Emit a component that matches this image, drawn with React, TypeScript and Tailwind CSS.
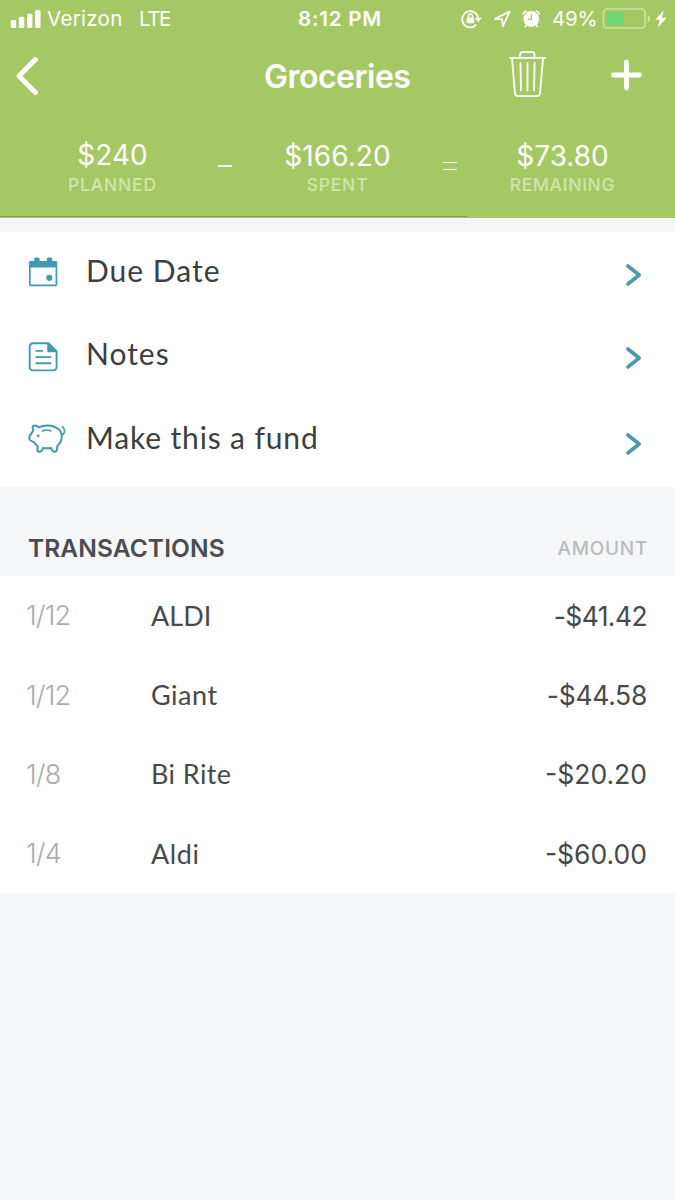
import React from 'react';

interface Transaction {
  date: string;
  name: string;
  amount: string;
  nameClass: string;
  amountClass: string;
}

const transactions: Transaction[] = [
  { date: '1/12', name: 'ALDI', amount: '-$41.42', nameClass: '', amountClass: 'tracking-[-0.6px]' },
  { date: '1/12', name: 'Giant', amount: '-$44.58', nameClass: 'tracking-[0.5px]', amountClass: 'tracking-[-0.3px]' },
  { date: '1/8', name: 'Bi Rite', amount: '-$20.20', nameClass: 'tracking-[0.4px]', amountClass: '' },
  { date: '1/4', name: 'Aldi', amount: '-$60.00', nameClass: 'tracking-[0.6px]', amountClass: '' },
];

const SignalIcon = () => (
  <svg width="32" height="20" viewBox="0 0 32 20" fill="white">
    <rect x="0.7" y="11" width="5.4" height="8" rx="1.5" />
    <rect x="8.8" y="7.8" width="5.5" height="11.2" rx="1.5" />
    <rect x="17" y="4.7" width="5.4" height="14.3" rx="1.5" />
    <rect x="25" y="1" width="5.5" height="18" rx="1.5" />
  </svg>
);

const RotationLockIcon = () => (
  <svg width="22" height="20" viewBox="0 0 22 20" fill="none" stroke="white" strokeWidth="1.7">
    <path d="M18.3 9A8.1 8.1 0 1 0 16.4 15.6" />
    <path d="M14.8 8.8h6.8l-3.3 4.6z" fill="white" stroke="none" />
    <rect x="6.6" y="8.6" width="7.6" height="5.6" rx="0.8" fill="white" stroke="none" />
    <path d="M8.4 9V7a2 2 0 0 1 4 0v2" strokeWidth="1.4" />
  </svg>
);

const LocationIcon = () => (
  <svg width="18" height="18" viewBox="0 0 18 18" fill="none" stroke="white" strokeWidth="1.8" strokeLinejoin="round">
    <path d="M16.6 1.6 2 8.8l7.2.6.6 7z" />
  </svg>
);

const AlarmIcon = () => (
  <svg width="18" height="18" viewBox="0 0 18 18" fill="none" stroke="white" strokeLinecap="round">
    <circle cx="9.3" cy="9" r="7.9" fill="white" stroke="none" />
    <path d="M1.2 4A5 5 0 0 1 4.2 1M17.4 4a5 5 0 0 0-3-3M4.2 15.2l-1 1.4M14.4 15.2l1 1.4" strokeWidth="1.6" />
    <path d="M9.4 4.6v4.8H6.2" stroke="#a4c964" strokeWidth="1.3" />
  </svg>
);

const BatteryIcon = () => (
  <svg width="49" height="22" viewBox="0 0 49 22" fill="none">
    <rect x="1.5" y="1" width="41.5" height="19" rx="3.5" stroke="#cde2a5" strokeWidth="1.6" />
    <rect x="5" y="4" width="17.2" height="13.2" rx="1" fill="#6dd572" />
    <path d="M45.7 7.3c3.2.8 3.2 6.1 0 6.9z" fill="#cde2a5" />
  </svg>
);

const BoltIcon = () => (
  <svg width="12" height="18" viewBox="0 0 12 18" fill="white">
    <path d="M8.6.3.4 9.8h4.2L3 17.6l8.4-9.9H7z" />
  </svg>
);

const TrashIcon = () => (
  <svg width="38" height="47" viewBox="0 0 38 47" fill="none" stroke="white" strokeWidth="1.8" strokeLinecap="round">
    <path d="M1 6.8h35" />
    <path d="M11 6.5V4.2A3.2 3.2 0 0 1 14.2 1h8.2a3.2 3.2 0 0 1 3.2 3.2v2.3" />
    <path d="m3 7.2 2.9 34.6a3.8 3.8 0 0 0 3.8 3.4h17.6a3.8 3.8 0 0 0 3.8-3.4L34 7.2" />
    <path d="M11.4 12l.6 27.4M18.5 12v27.4M25.6 12l-.6 27.4" />
  </svg>
);

const CalendarIcon = () => (
  <svg width="30" height="30" viewBox="0 0 30 30" fill="#4398b3">
    <path d="M2 4h26a1 1 0 0 1 1 1v5.5H1V5a1 1 0 0 1 1-1z" />
    <rect x="6.2" y="0.4" width="5.4" height="6" rx="1.6" />
    <rect x="18.8" y="0.4" width="5.4" height="6" rx="1.6" />
    <rect x="1.8" y="5" width="26.6" height="23.3" rx="0.8" fill="none" stroke="#4398b3" strokeWidth="1.7" />
    <circle cx="21.3" cy="20.8" r="3.1" />
  </svg>
);

const NotesIcon = () => (
  <svg width="30" height="30" viewBox="0 0 30 30" fill="none" stroke="#4398b3" strokeWidth="1.9" strokeLinecap="round" strokeLinejoin="round">
    <path d="M20.5 1.3H5a3.3 3.3 0 0 0-3.3 3.3v20.5A3.3 3.3 0 0 0 5 28.4h20.3a3.3 3.3 0 0 0 3.3-3.3V9.2z" />
    <path d="M20.2 2v7.2h8z" fill="#4398b3" />
    <path d="M8.3 8.9h6M8.3 15.1h14.2M8.3 21.3h14.2" />
  </svg>
);

const PiggyIcon = () => (
  <svg width="38" height="30" viewBox="0 0 38 30" fill="none" stroke="#4398b3" strokeWidth="2" strokeLinecap="round" strokeLinejoin="round">
    <path d="M11 3.4C9.2 1.9 6.6 1.3 5 2c-.9.6-.1 3 .3 4.6C4 8 3.6 9.4 3 10.6c-1.3.2-1.6.8-1.6 2v2.6c0 1.4 3 2 4.4 2.8 1 1.8 2.4 3 4 4l-.5 3.4c-.1 1.5.5 2.3 2 2.3s2.3-.4 2.8-1.6l.9-2.1c2.8.5 5.4.5 8.2 0l.8 2.1c.5 1.2 1.3 1.6 2.6 1.6 1.5 0 2.1-.6 2.3-2l.6-4c2.7-2.4 4.3-5.5 4.3-9.2 0-3-1.2-5.6-3.4-7.4C27.6 2.8 24.4 1.5 20.4 1.4 17 1.3 13.6 2 11 3.4z" />
    <path d="M33.6 11.2c2-.8 3.1-2.6 2.9-4.8-.2-1.6-.9-2.8-2.1-3.8" strokeWidth="1.6" />
    <path d="M14.4 7.2c2.6-1.3 5.8-1.4 8.6-.2" strokeWidth="1.5" />
    <circle cx="10.2" cy="11.8" r="1.4" fill="#4398b3" stroke="none" />
  </svg>
);

const Chevron = () => (
  <svg width="18" height="24" viewBox="0 0 18 24" fill="none" stroke="#4a99ae" strokeWidth="3.6" strokeLinecap="round" strokeLinejoin="round">
    <path d="M2.9 3 14.2 12 2.9 21" />
  </svg>
);

interface SummaryProps {
  value: string;
  label: string;
  valueClass: string;
  labelClass: string;
}

const Summary: React.FC<SummaryProps> = ({ value, label, valueClass, labelClass }) => (
  <div className="flex flex-col items-center w-[225px] h-14 text-center">
    <span className={`text-[28px] leading-8 text-white ${valueClass}`}>{value}</span>
    <span className={`mt-auto text-[17.5px] leading-5 font-medium text-[#d1e4ac] ${labelClass}`}>{label}</span>
  </div>
);

interface MenuRowProps {
  icon: React.ReactNode;
  label: string;
  className: string;
  iconClass: string;
  labelClass: string;
  chevronClass: string;
}

const MenuRow: React.FC<MenuRowProps> = ({ icon, label, className, iconClass, labelClass, chevronClass }) => (
  <div className={`flex items-start pl-7 pr-8 ${className}`}>
    <div className={`w-[58px] ${iconClass}`}>{icon}</div>
    <span className={`flex-1 font-[Lato,sans-serif] text-[30px] leading-9 text-[#3b3e43] ${labelClass}`}>{label}</span>
    <div className={chevronClass}><Chevron /></div>
  </div>
);

export default function App() {
  return (
    <div className="w-[675px] h-[1200px] overflow-hidden bg-[#f5f6f8] font-[Inter,sans-serif]">
      {/* Header */}
      <header className="flex flex-col h-[218px] bg-[#a4c964] text-white">
        <div className="flex items-center h-9 pt-0.5 pl-2.5 text-[20.5px] leading-6">
          <SignalIcon />
          <span className="ml-[5px] w-[92px] tracking-[0.3px]">Verizon</span>
          <span className="w-[159px] tracking-[-1.4px]">LTE</span>
          <span className="w-[162px] font-semibold tracking-[0.8px]">8:12 PM</span>
          <RotationLockIcon />
          <div className="ml-[11px]"><LocationIcon /></div>
          <div className="ml-[11px]"><AlarmIcon /></div>
          <span className="ml-3 w-[50px] tracking-[-0.2px]">49%</span>
          <BatteryIcon />
          <div className="ml-1"><BoltIcon /></div>
        </div>

        <div className="flex items-center h-20 px-4">
          <svg width="24" height="40" viewBox="0 0 24 40" fill="none" stroke="white" strokeWidth="5" strokeLinecap="round" strokeLinejoin="round">
            <path d="M19.4 3.6 3 20l16.4 16.4" />
          </svg>
          <h1 className="ml-[197px] w-[202px] pl-[27px] pt-0.5 text-[32px] leading-10 font-semibold tracking-[-0.5px]">Groceries</h1>
          <div className="ml-[70px] mb-[3px]"><TrashIcon /></div>
          <svg className="ml-[63px] mb-0.5" width="32" height="32" viewBox="0 0 32 32" stroke="white" strokeWidth="4.8" strokeLinecap="round">
            <path d="M16.5 3v26M3.5 16h26" />
          </svg>
        </div>

        <div className="relative flex pt-[23px]">
          <Summary value="$240" label="PLANNED" valueClass="" labelClass="tracking-[0.8px]" />
          <Summary value="$166.20" label="SPENT" valueClass="pt-px tracking-[0.1px]" labelClass="tracking-[0.8px]" />
          <Summary value="$73.80" label="REMAINING" valueClass="pt-px" labelClass="tracking-[0.7px]" />
          <div className="absolute left-[218px] top-[49px] h-[1.5px] w-[14px] bg-white" />
          <div className="absolute left-[443px] top-[46px] h-[8px] w-[14px] border-y-[1.5px] border-white" />
        </div>
        <div className="mt-auto h-0.5">
          <div className="h-px w-[467px] bg-[#839d53]" />
        </div>
      </header>

      {/* Options */}
      <section className="mt-3.5 h-[255px] bg-white">
        <MenuRow icon={<CalendarIcon />} label="Due Date" className="h-[83px]" iconClass="mt-[25px]" labelClass="mt-5 tracking-[1px]" chevronClass="mt-[31px]" />
        <MenuRow icon={<NotesIcon />} label="Notes" className="h-[83px]" iconClass="mt-[26.5px]" labelClass="mt-5 tracking-[1px]" chevronClass="mt-[31px]" />
        <MenuRow icon={<PiggyIcon />} label="Make this a fund" className="h-[89px]" iconClass="mt-[26px]" labelClass="mt-[21px] tracking-[0.85px]" chevronClass="mt-[34px]" />
      </section>

      {/* Transactions */}
      <div className="flex items-end justify-between h-[89px] pl-7 pr-[27px] pb-3">
        <h2 className="text-[24.5px] leading-8 font-semibold tracking-[0.1px] text-[#4a4c4f]">TRANSACTIONS</h2>
        <span className="text-[19px] leading-[30px] font-medium tracking-[0.7px] text-[#b9bbbd]">AMOUNT</span>
      </div>
      <section className="bg-white text-[27px]">
        {transactions.map((t, i) => (
          <div key={i} className="flex items-center h-[79.25px] pl-[26px] pr-7 text-[#48494c]">
            <span className="w-[125px] pt-0.5 font-light tracking-[-0.7px] text-[#a9abae]">{t.date}</span>
            <span className={`flex-1 pt-px font-[Lato,sans-serif] ${t.nameClass}`}>{t.name}</span>
            <span className={`pt-0.5 text-[26.5px] ${t.amountClass}`}>{t.amount}</span>
          </div>
        ))}
      </section>
    </div>
  );
}
